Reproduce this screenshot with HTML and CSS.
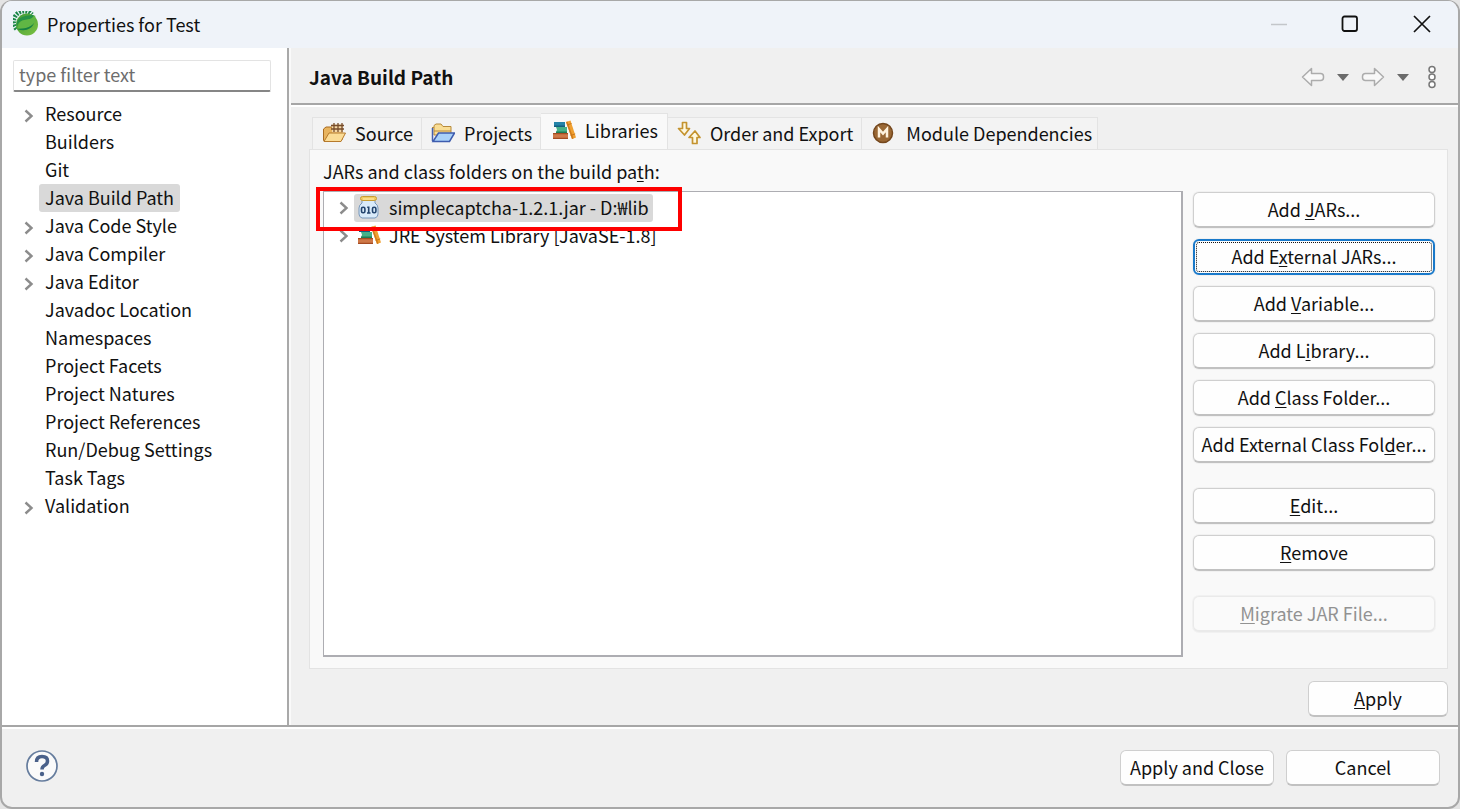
FILE: index.html
```html
<!DOCTYPE html>
<html lang="en">
<head>
<meta charset="utf-8">
<title>Properties for Test</title>
<link rel="stylesheet" href="styles.css">
</head>
<body>
<svg class="defs" aria-hidden="true">
  <symbol id="chevron" viewBox="0 0 10 14"><path d="M1.500 1.500 7.500 7l-6 5.500" fill="none" stroke="#8c8c8c" stroke-width="2.400"/></symbol>
  <symbol id="books" viewBox="0 0 24 20">
    <path d="M2 2h11v5H2z" fill="#2483a8"/><path d="M2 5.500h11V7H2z" fill="#135f80"/>
    <path d="M4 7h11v5.500H4l1-2.700z" fill="#46b088"/><path d="M4 11.500h11V13H4z" fill="#1f7d55"/>
    <path d="M1 13h15v6H1z" fill="#cf7848"/><path d="M1 13h15v1.200H1zM1 17.800h15V19H1z" fill="#a54b22"/>
    <path d="M14 2l4.500-1.500L24 17.500l-4 1.500z" fill="#f0a030"/><path d="M14 2l1.500-.5L21.500 18.400l-1.500.6z" fill="#d27c1b"/><path d="M15 5l4.500-1.500M18.700 15.500l4.500-1.600" stroke="#c9761b"/>
  </symbol>
</svg>
<main class="window">
  <header class="titlebar">
    <svg class="logo" viewBox="0 0 26 26" aria-hidden="true">
      <defs><linearGradient id="leaf" x1="0" y1="0" x2="1" y2="1"><stop offset="0" stop-color="#3f9b35"/><stop offset="1" stop-color="#7cc143"/></linearGradient></defs>
      <path d="M3.500 18A10.500 10.500 0 0 1 19 3.500" fill="none" stroke="#1d8749" stroke-width="4.500" stroke-dasharray="2 1.200"/>
      <circle cx="14" cy="13.500" r="11" fill="url(#leaf)"/>
      <path d="M4 16C2 8 9 4 21 4c-2 4-4 4.500-8 5-5 .5-8 2-9 7z" fill="#259246"/>
      <path d="M5 17c0-6 4-8 9-8.500 4-.500 6-1.500 8-4.500 1.500 6-1 11-7 13-4 1-7 1-10 0z" fill="#60b644"/>
      <path d="M4 18c7-.5 13-1 17-6-2 6-9 9-17 6z" fill="#168243"/>
    </svg>
    <h1 class="title">Properties for Test</h1>
    <div class="caption">
      <button class="iconbtn" aria-label="Minimize" disabled><svg width="16" height="16"><path d="M0 8.500h16" stroke="#c3c6ca" stroke-width="1.500"/></svg></button>
      <button class="iconbtn" aria-label="Maximize"><svg width="18" height="18"><rect x="1.500" y="1.500" width="14.500" height="14.500" rx="2" fill="none" stroke="#111" stroke-width="1.800"/></svg></button>
      <button class="iconbtn" aria-label="Close"><svg width="18" height="18"><path d="M1 1l16 16M17 1 1 17" stroke="#111" stroke-width="1.700"/></svg></button>
    </div>
  </header>
  <div class="body">
    <nav class="side">
      <input class="filter" type="text" placeholder="type filter text" aria-label="type filter text">
      <ul class="tree">
        <li class="node"><svg class="chev"><use href="#chevron"/></svg><span class="label">Resource</span></li>
        <li class="node"><span class="label">Builders</span></li>
        <li class="node"><span class="label">Git</span></li>
        <li class="node"><span class="label selected">Java Build Path</span></li>
        <li class="node"><svg class="chev"><use href="#chevron"/></svg><span class="label">Java Code Style</span></li>
        <li class="node"><svg class="chev"><use href="#chevron"/></svg><span class="label">Java Compiler</span></li>
        <li class="node"><svg class="chev"><use href="#chevron"/></svg><span class="label">Java Editor</span></li>
        <li class="node"><span class="label">Javadoc Location</span></li>
        <li class="node"><span class="label">Namespaces</span></li>
        <li class="node"><span class="label">Project Facets</span></li>
        <li class="node"><span class="label">Project Natures</span></li>
        <li class="node"><span class="label">Project References</span></li>
        <li class="node"><span class="label">Run/Debug Settings</span></li>
        <li class="node"><span class="label">Task Tags</span></li>
        <li class="node"><svg class="chev"><use href="#chevron"/></svg><span class="label">Validation</span></li>
      </ul>
    </nav>
    <section class="page">
      <header class="pagehead">
        <h2 class="heading">Java Build Path</h2>
        <div class="history">
          <button class="iconbtn" aria-label="Back"><svg width="24" height="20"><path d="M1.500 10 10.500 1.500v5h9q3 0 3 3v1q0 3-3 3h-9v5z" fill="#f8f8f8" stroke="#acacac" stroke-width="1.500" stroke-linejoin="round"/></svg></button>
          <button class="iconbtn" aria-label="Back history"><svg width="12" height="7"><path d="M0 0h12L6 7z" fill="#6b6b6b"/></svg></button>
          <button class="iconbtn" aria-label="Forward"><svg width="24" height="20"><path d="M22.500 10 13.500 1.500v5h-9q-3 0-3 3v1q0 3 3 3h9v5z" fill="#f8f8f8" stroke="#acacac" stroke-width="1.500" stroke-linejoin="round"/></svg></button>
          <button class="iconbtn" aria-label="Forward history"><svg width="12" height="7"><path d="M0 0h12L6 7z" fill="#6b6b6b"/></svg></button>
          <button class="iconbtn menu" aria-label="Menu"><svg width="10" height="24"><g fill="#fff" stroke="#777" stroke-width="1.500"><circle cx="5" cy="4.500" r="3"/><circle cx="5" cy="12" r="3"/><circle cx="5" cy="19.500" r="3"/></g></svg></button>
        </div>
      </header>
      <div class="content">
        <div class="tabs" role="tablist">
          <button class="tab" role="tab"><svg class="tabicon" viewBox="0 0 24 20"><path d="M1.500 17.500V6L4 4h6l2 2h8v11z" fill="#e8b45f" stroke="#a86b21"/><path d="M10 1.500h11v8H10z" fill="#f6d9a7"/><path d="M9 2.500h13M9 6h13M12 0v9M16 0v9M20 0v9" stroke="#774c2b" stroke-width="1.300"/><path d="M2 18.500 7 10h16.500L19 18.500z" fill="#fbdc96" stroke="#b67a2c"/></svg>Source</button>
          <button class="tab" role="tab"><svg class="tabicon" viewBox="0 0 24 20"><path d="M3 12V2.500L5 1h5l2 2.500h8V12z" fill="#f9dd94" stroke="#b78a3b"/><path d="M1 4.500h2M3 8h17" stroke="#b78a3b"/><path d="M1.500 5v13" stroke="#4560ad" stroke-width="1.500"/><path d="M2 18.500 7.500 10h16L18.500 18.500z" fill="#a9d1f8" stroke="#3e5cae" stroke-width="1.500"/></svg>Projects</button>
          <button class="tab active" role="tab" aria-selected="true"><svg class="tabicon"><use href="#books"/></svg>Libraries</button>
          <button class="tab order" role="tab"><svg class="tabicon" viewBox="0 0 24 24"><path d="M5.500 1.500h4v6h3L7.500 14l-6-6.500h4zM15.500 22.500h4.500v-6h3L18 10l-6 6.500h3.500z" fill="#fff8df" stroke="#c4932f" stroke-width="1.700" stroke-linejoin="round"/></svg>Order and Export</button>
          <button class="tab module" role="tab"><svg class="tabicon" viewBox="0 0 22 22"><circle cx="11" cy="11" r="9.500" fill="#9a6835" stroke="#74471d" stroke-width="1.500"/><path d="M7 15.500V7l4 4.500L15 7v8.500" fill="none" stroke="#fff3df" stroke-width="2.500"/></svg>Module Dependencies</button>
        </div>
        <div class="panel" role="tabpanel">
          <p class="caption-text">JARs and class folders on the build pa<u>t</u>h:</p>
          <div class="columns">
            <ul class="list">
              <li class="entry"><svg class="chev"><use href="#chevron"/></svg><span class="item selected"><svg class="itemicon" viewBox="0 0 24 24"><path d="M5 5.500h13v2.500q3 2 3 5v6q0 3-3 4H5q-3-1-3-4v-6q0-3 3-5z" fill="#d9ebfa" stroke="#7797bb"/><rect x="3.500" y="1.500" width="16" height="4" rx="2" fill="#f1ca5f" stroke="#c89c32"/><path d="M6 4h11" stroke="#fff0b5"/><g fill="none" stroke="#24456e" stroke-width="1.600"><rect x="4.500" y="12.300" width="3.400" height="5.400" rx="1.500"/><path d="M10.200 12.300h1.500V18M10 18h3.500"/><rect x="15.500" y="12.300" width="3.400" height="5.400" rx="1.500"/></g></svg>simplecaptcha-1.2.1.jar - D:₩lib</span><span class="highlight"></span></li>
              <li class="entry"><svg class="chev"><use href="#chevron"/></svg><span class="item"><svg class="itemicon" viewBox="0 0 24 20"><use href="#books"/></svg>JRE System Library [JavaSE-1.8]</span></li>
            </ul>
            <div class="actions">
              <button class="btn">Add <u>J</u>ARs...</button>
              <button class="btn focused">Add E<u>x</u>ternal JARs...</button>
              <button class="btn">Add <u>V</u>ariable...</button>
              <button class="btn">Add L<u>i</u>brary...</button>
              <button class="btn">Add <u>C</u>lass Folder...</button>
              <button class="btn">Add External Class Fol<u>d</u>er...</button>
              <button class="btn spaced"><u>E</u>dit...</button>
              <button class="btn"><u>R</u>emove</button>
              <button class="btn spaced" disabled><u>M</u>igrate JAR File...</button>
            </div>
          </div>
        </div>
        <div class="applyrow"><button class="btn apply"><u>A</u>pply</button></div>
      </div>
    </section>
  </div>
  <footer class="footer">
    <button class="iconbtn" aria-label="Help"><svg width="34" height="34"><circle cx="17" cy="17" r="15" fill="#fafafa" stroke="#657c9d" stroke-width="1.700"/><path d="M11.500 13q0-5.500 5.500-5.500t5.500 4.500q0 3-3 4.500-2.500 1.300-2.500 4" fill="none" stroke="#4a618a" stroke-width="3.500"/><circle cx="17" cy="25" r="2.200" fill="#4a618a"/></svg></button>
    <div class="footer-actions"><button class="btn wide">Apply and Close</button><button class="btn wide">Cancel</button></div>
  </footer>
</main>
</body>
</html>
```
FILE: styles.css
```css
* { box-sizing: border-box; }
body {
  margin: 0;
  background: #e4e4e4;
  color: #111;
  font: 18px/28px "Noto Sans CJK KR", "Noto Sans", sans-serif;
}
button, input { font: inherit; color: inherit; }
svg { display: block; flex: none; }
ul { list-style: none; margin: 0; padding: 0; }
h1, h2, p { margin: 0; }
u { text-underline-offset: 2px; text-decoration-thickness: 1px; text-decoration-skip-ink: none; }
.defs { position: absolute; width: 0; height: 0; }

.window {
  display: flex;
  flex-direction: column;
  min-height: 100vh;
  border: 1px solid #a8a8a8;
  border-width: 1px 2px 2px;
  border-radius: 12px;
  background: #f0f0f0;
  overflow: hidden;
}
.titlebar {
  display: flex;
  align-items: center;
  height: 47px;
  padding: 0 27px 2px 11px;
  background: #eff3f9;
}
.logo { width: 26px; height: 26px; }
.title { margin-left: 8px; font-size: 18px; font-weight: 400; }
.caption { display: flex; align-items: center; gap: 54px; margin-left: auto; }
.iconbtn { padding: 0; border: 0; background: none; }

.body { display: flex; flex: 1; }
.side {
  flex: none;
  width: 287px;
  padding: 12px 16px 0 11px;
  background: #fff;
  border-right: 2px solid #a9a9a9;
}
.filter {
  display: block;
  width: 100%;
  height: 32px;
  padding: 0 5px 3px;
  border: 1px solid #e3e3e3;
  border-bottom: 2px solid #868686;
  border-radius: 2px;
  background: #fff;
}
.filter::placeholder { color: #6d6d6d; opacity: 1; }
.tree { margin-top: 8px; padding-left: 26px; }
.node { position: relative; display: flex; height: 28px; }
.label { padding: 0 6px 2px; border-radius: 3px; line-height: 26px; }
.selected { background: #d9d9d9; }
.chev { width: 10px; height: 14px; }
.node .chev { position: absolute; left: -15px; top: 9px; }

.page { display: flex; flex: 1; flex-direction: column; min-width: 0; border-left: 2px solid #fafafa; }
.pagehead {
  display: flex;
  align-items: center;
  justify-content: space-between;
  height: 57px;
  padding: 3px 21px 0 18px;
  border-bottom: 2px solid #a6a6a6;
  box-shadow: 0 2px #fff;
}
.heading { font-size: 19px; font-weight: 700; }
.history { display: flex; align-items: center; gap: 12px; }
.menu { margin-left: 6px; }
.content { display: flex; flex: 1; flex-direction: column; padding: 8px 10px 8px 18px; }
.tabs { display: flex; align-items: flex-end; padding-left: 3px; }
.tab {
  display: flex;
  align-items: center;
  gap: 9px;
  height: 32px;
  padding: 0 8px 2px 9px;
  border: 1px solid #e3e3e3;
  border-width: 1px 1px 0 0;
  background: #f3f3f3;
  white-space: nowrap;
}
.tab:first-child { border-left-width: 1px; }
.tab.active { height: 36px; padding: 0 9px 4px 11px; background: #f9f9f9; }
.tabicon { width: 24px; height: 20px; }
.order .tabicon { height: 24px; }
.module .tabicon { width: 22px; height: 22px; }
.module { gap: 12px; padding: 0 5px 2px 10px; }
.panel {
  display: flex;
  flex: 1;
  flex-direction: column;
  padding: 7px 12px 11px 13px;
  border: 1px solid #e3e3e3;
  background: #f9f9f9;
}
.columns { display: flex; flex: 1; gap: 10px; margin-top: 6px; }
.list { flex: 1; min-width: 0; padding: 2px 0 0 15px; border: 2px solid #adadb2; border-width: 1px 2px 2px 1px; background: #fff; }
.entry { position: relative; display: flex; align-items: center; gap: 5px; height: 28px; }
.item { display: flex; align-items: center; gap: 8px; padding: 0 4px 2px 3px; border-radius: 3px; line-height: 26px; white-space: nowrap; }
.itemicon { width: 24px; height: 24px; }
.highlight { position: absolute; left: -23px; top: -7px; width: 366px; height: 44px; border: 4px solid #fe0000; z-index: 1; }
.actions { display: flex; flex-direction: column; gap: 11px; width: 242px; padding-top: 1px; }
.btn {
  height: 36px;
  padding: 0 4px 2px;
  border: 1px solid #cfcfcf;
  border-bottom: 2px solid #c1c1c1;
  border-radius: 6px;
  background: #fefefe;
  white-space: nowrap;
}
.actions .btn { box-shadow: 0 0 0 1px #f1f1f1; }
.btn:disabled { color: #929292; background: #fafafa; border-color: #eaeaea; }
.actions .focused { border: 2px solid #1979ca; outline: 1px dotted #111; outline-offset: -4px; }
.spaced { margin-top: 14px; }
.applyrow { display: flex; justify-content: flex-end; margin-top: 12px; }
.apply { width: 140px; }
.footer {
  display: flex;
  align-items: center;
  justify-content: space-between;
  height: 82px;
  padding: 0 18px 2px 23px;
  border-top: 2px solid #a6a6a6;
  box-shadow: inset 0 2px #fff;
}
.footer-actions { display: flex; gap: 12px; padding-top: 4px; }
.wide { width: 154px; }
```
